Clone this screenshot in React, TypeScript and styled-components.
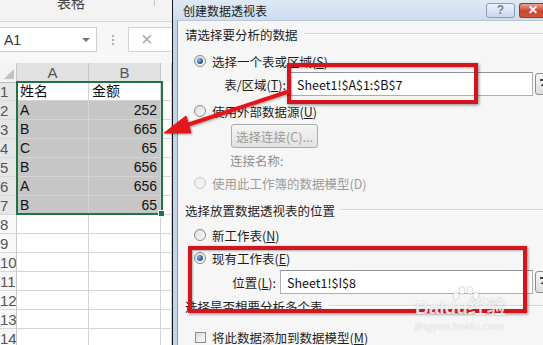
import React from "react";
import styled, { createGlobalStyle } from "styled-components";

const GlobalStyle = createGlobalStyle`
  html, body {
    margin: 0;
    padding: 0;
    background: #fff;
  }
  body {
    width: 543px;
    height: 345px;
    overflow: hidden;
  }
`;

const CJK = `"Noto Sans CJK SC", "Liberation Sans", sans-serif`;
const SHEET_FONT = `"Liberation Sans", "Noto Sans CJK SC", sans-serif`;

const Page = styled.div`
  position: relative;
  display: flex;
  width: 543px;
  height: 345px;
  overflow: hidden;
  background: #fff;
`;

/* ---------- spreadsheet ---------- */

const Sheet = styled.div`
  width: 172px;
  flex: none;
  display: flex;
  flex-direction: column;
  border-right: 1px solid #151515;
  background: #fff;
  font-family: ${SHEET_FONT};
  overflow: hidden;
`;

const Ribbon = styled.div`
  height: 22px;
  flex: none;
  display: flex;
  box-sizing: border-box;
  background: #f3f3f3;
  border-bottom: 1px solid #d6d6d6;
`;

const RibbonGroup = styled.div`
  width: 155px;
  height: 11px;
  box-sizing: border-box;
  padding-right: 12px;
  border-right: 1px solid #c6c6c6;
  text-align: center;
  font-family: ${CJK};
  font-size: 14px;
  line-height: 14px;
  color: #444;
  margin-top: -5px;
  overflow: visible;
`;

const FormulaBar = styled.div`
  height: 41px;
  flex: none;
  display: flex;
  align-items: flex-start;
  box-sizing: border-box;
  padding-top: 5px;
  background: #f7f7f7;
`;

const NameBox = styled.div`
  width: 97px;
  height: 25px;
  box-sizing: border-box;
  display: flex;
  align-items: center;
  justify-content: space-between;
  padding: 0 6px 0 4px;
  background: #fff;
  border: 1px solid #cfcfcf;
  border-left: none;
  font-size: 14px;
  color: #333;
`;

const DropArrow = styled.span`
  width: 0;
  height: 0;
  border-left: 4px solid transparent;
  border-right: 4px solid transparent;
  border-top: 4px solid #777;
`;

const Dots = styled.div`
  width: 31px;
  height: 25px;
  display: flex;
  flex-direction: column;
  align-items: center;
  justify-content: center;
  gap: 2px;
`;

const Dot = styled.span`
  width: 2px;
  height: 2px;
  background: #b0b0b0;
`;

const CancelBox = styled.div`
  flex: 1;
  height: 25px;
  box-sizing: border-box;
  display: flex;
  align-items: center;
  padding-left: 12px;
  background: #fff;
  border: 1px solid #d4d4d4;
  border-right: none;
  font-size: 20px;
  color: #a8a8a8;
`;

const Grid = styled.div`
  position: relative;
  display: flex;
  flex-direction: column;
`;

const GridRow = styled.div`
  display: grid;
  grid-template-columns: 17px 72px 72px 1fr;
  height: 19px;
  flex: none;
`;

const Cell = styled.div<{ $selected?: boolean; $right?: boolean }>`
  box-sizing: border-box;
  border-right: 1px solid #d4d4d4;
  border-bottom: 1px solid #d4d4d4;
  background: ${(p) => (p.$selected ? "#c6c6c6" : "#fff")};
  font-size: 14px;
  line-height: 18px;
  color: #111;
  padding: 0 ${(p) => (p.$right ? "3px" : "0")} 0 ${(p) => (p.$right ? "0" : "3px")};
  text-align: ${(p) => (p.$right ? "right" : "left")};
  white-space: nowrap;
  overflow: hidden;
`;

const RowHead = styled.div<{ $active?: boolean }>`
  box-sizing: border-box;
  border-right: 1px solid #c6c6c6;
  border-bottom: 1px solid #d8d8d8;
  background: ${(p) => (p.$active ? "#e6e6e6" : "#f8f8f8")};
  font-size: 15px;
  line-height: 19px;
  color: #555;
  overflow: hidden;
`;

const ColHead = styled.div<{ $active?: boolean }>`
  box-sizing: border-box;
  border-right: 1px solid #c6c6c6;
  border-bottom: 1px solid #bdbdbd;
  background: ${(p) => (p.$active ? "#e1e1e1" : "#f3f3f3")};
  font-size: 15px;
  line-height: 19px;
  color: #555;
  text-align: center;
`;

const Corner = styled.div`
  position: relative;
  box-sizing: border-box;
  border-right: 1px solid #c6c6c6;
  border-bottom: 1px solid #bdbdbd;
  background: #f3f3f3;
  &::after {
    content: "";
    position: absolute;
    right: 2px;
    bottom: 3px;
    width: 0;
    height: 0;
    border-left: 10px solid transparent;
    border-bottom: 10px solid #c2c2c2;
  }
`;

const Selection = styled.div`
  position: absolute;
  left: 16px;
  top: 18px;
  width: 147px;
  height: 134px;
  box-sizing: border-box;
  border: 2px solid #217346;
  pointer-events: none;
`;

const FillHandle = styled.span`
  position: absolute;
  right: -4px;
  bottom: -4px;
  width: 5px;
  height: 5px;
  background: #217346;
  border: 1px solid #fff;
`;

/* ---------- dialog ---------- */

const Dialog = styled.div`
  flex: 1;
  display: flex;
  flex-direction: column;
  background: linear-gradient(90deg, #c3d5ec, #c9daef);
  font-family: ${CJK};
  color: #1e1e1e;
  overflow: hidden;
`;

const TitleBar = styled.div`
  height: 20px;
  flex: none;
  display: flex;
  align-items: center;
  padding-left: 10px;
  background: linear-gradient(#dfe9f5, #cedcee);
  font-size: 12px;
  color: #1b1b1b;
`;

const TitleText = styled.span`
  flex: 1;
`;

const HelpButton = styled.span`
  width: 29px;
  height: 15px;
  box-sizing: border-box;
  display: flex;
  align-items: center;
  justify-content: center;
  margin-right: 4px;
  border: 1px solid #8b9cb4;
  border-radius: 3px;
  background: linear-gradient(#eef3fa, #c9d7ea);
  font-family: "Liberation Sans", sans-serif;
  font-size: 12px;
  font-weight: bold;
  color: #6f7f96;
`;

const CloseButton = styled.span`
  width: 24px;
  height: 15px;
  box-sizing: border-box;
  display: flex;
  align-items: center;
  padding-left: 8px;
  border: 1px solid #8d3b2c;
  border-right: none;
  border-radius: 3px 0 0 3px;
  background: linear-gradient(#e9a493, #c9452d 55%, #d3583c);
  font-family: "Liberation Sans", sans-serif;
  font-size: 12px;
  font-weight: bold;
  color: #fff;
`;

const Body = styled.div`
  flex: 1;
  display: flex;
  flex-direction: column;
  margin-left: 4px;
  padding-left: 7px;
  border-left: 1px solid #8e9db2;
  border-top: 1px solid #b8c6d8;
  background: #f6f6f6;
  font-size: 12.5px;
  overflow: hidden;
`;

const SectionTitle = styled.div<{ $mt: number }>`
  height: 20px;
  flex: none;
  display: flex;
  align-items: center;
  margin-top: ${(p) => p.$mt}px;
  white-space: nowrap;
  &::after {
    content: "";
    flex: 1;
    margin-left: 6px;
    border-top: 1px solid #d7d7d7;
    border-bottom: 1px solid #fff;
  }
`;

const OptionRow = styled.div<{ $mt: number; $indent?: number; $disabled?: boolean }>`
  height: 20px;
  flex: none;
  display: flex;
  align-items: center;
  gap: 6px;
  margin-top: ${(p) => p.$mt}px;
  padding-left: ${(p) => p.$indent ?? 9}px;
  color: ${(p) => (p.$disabled ? "#9b9b9b" : "#1e1e1e")};
  white-space: nowrap;
`;

const Radio = styled.span<{ $checked?: boolean; $disabled?: boolean }>`
  position: relative;
  width: 12px;
  height: 12px;
  flex: none;
  box-sizing: border-box;
  border-radius: 50%;
  border: 1px solid ${(p) => (p.$disabled ? "#c8c8c8" : "#8a8a8a")};
  background: ${(p) =>
    p.$disabled ? "#f2f2f2" : "linear-gradient(135deg, #dedede, #fbfbfb)"};
  &::after {
    content: "";
    display: ${(p) => (p.$checked ? "block" : "none")};
    position: absolute;
    left: 2px;
    top: 2px;
    width: 6px;
    height: 6px;
    border-radius: 50%;
    background: radial-gradient(circle at 35% 35%, #8fb7e4, #1d4f8a 70%);
  }
`;

const CheckBox = styled.span`
  width: 11px;
  height: 11px;
  flex: none;
  box-sizing: border-box;
  border: 1px solid #8e8e8e;
  background: linear-gradient(135deg, #dcdcdc, #fafafa);
`;

const FieldRow = styled.div<{ $mt: number }>`
  height: 24px;
  flex: none;
  display: flex;
  align-items: center;
  margin-top: ${(p) => p.$mt}px;
`;

const FieldLabel = styled.span<{ $width: number }>`
  width: ${(p) => p.$width}px;
  flex: none;
  box-sizing: border-box;
  padding-right: 4px;
  text-align: right;
  white-space: nowrap;
`;

const TextInput = styled.div<{ $width: number }>`
  flex: none;
  width: ${(p) => p.$width}px;
  height: 24px;
  box-sizing: border-box;
  display: flex;
  align-items: center;
  padding-left: 6px;
  background: #fff;
  border: 1px solid #abadb3;
  border-top-color: #8f939c;
  font-size: 12.5px;
  color: #111;
`;

const CollapseButton = styled.span`
  width: 20px;
  height: 22px;
  flex: none;
  box-sizing: border-box;
  margin-left: 2px;
  display: flex;
  align-items: center;
  padding-left: 3px;
  border: 1px solid #8c8c8c;
  border-radius: 3px;
  background: linear-gradient(#f7f7f7, #dedede);
`;

const ConnectButton = styled.div`
  width: 87px;
  height: 24px;
  flex: none;
  box-sizing: border-box;
  margin-top: 3px;
  margin-left: 46px;
  display: flex;
  align-items: center;
  justify-content: center;
  border: 1px solid #acacac;
  border-radius: 3px;
  background: linear-gradient(#f4f4f4, #e2e2e2);
  color: #9a9a9a;
  white-space: nowrap;
`;

const PlainRow = styled.div<{ $mt: number; $indent: number }>`
  height: 20px;
  flex: none;
  display: flex;
  align-items: center;
  margin-top: ${(p) => p.$mt}px;
  padding-left: ${(p) => p.$indent}px;
  color: #8f8f8f;
  white-space: nowrap;
`;

/* ---------- annotations ---------- */

const RedBox = styled.div<{ $x: number; $y: number; $w: number; $h: number }>`
  position: absolute;
  left: ${(p) => p.$x}px;
  top: ${(p) => p.$y}px;
  width: ${(p) => p.$w}px;
  height: ${(p) => p.$h}px;
  box-sizing: border-box;
  border: 4px solid #d3161d;
  box-shadow: 1px 1px 3px rgba(0, 0, 0, 0.45), inset 1px 1px 2px rgba(0, 0, 0, 0.3);
  pointer-events: none;
`;

const ArrowLayer = styled.svg`
  position: absolute;
  left: 0;
  top: 0;
  pointer-events: none;
`;

const Watermark = styled.div`
  position: absolute;
  left: 415px;
  top: 286px;
  width: 100px;
  display: flex;
  flex-direction: column;
  align-items: flex-start;
  pointer-events: none;
`;

const Paw = styled.svg`
  margin-left: 36px;
  margin-bottom: -6px;
`;

const WatermarkLogo = styled.div`
  font-family: "Liberation Sans", "Noto Sans CJK SC", sans-serif;
  font-size: 19px;
  font-weight: bold;
  line-height: 19px;
  color: rgba(255, 255, 255, 0.85);
  text-shadow: 0 0 1px rgba(0, 0, 0, 0.3);
  white-space: nowrap;
`;

const WatermarkUrl = styled.div`
  font-family: "Liberation Sans", sans-serif;
  font-size: 11px;
  line-height: 12px;
  color: rgba(255, 255, 255, 0.7);
  text-shadow: 0 0 1px rgba(0, 0, 0, 0.2);
  margin-top: 3px;
  white-space: nowrap;
`;

const rows: [string, string][] = [
  ["姓名", "金额"],
  ["A", "252"],
  ["B", "665"],
  ["C", "65"],
  ["B", "656"],
  ["A", "656"],
  ["B", "65"],
];

const CollapseIcon = () => (
  <svg width="10" height="12" viewBox="0 0 10 12">
    <rect x="1" y="1" width="8" height="2" fill="#444" />
    <path d="M5 4 L1.5 8 H4 V11 H6 V8 H8.5 Z" fill="#444" />
  </svg>
);

const App = () => {
  const blankRows = [8, 9, 10, 11, 12, 13, 14];

  return (
    <>
      <GlobalStyle />
      <Page>
        <Sheet>
          <Ribbon>
            <RibbonGroup>表格</RibbonGroup>
          </Ribbon>
          <FormulaBar>
            <NameBox>
              A1
              <DropArrow />
            </NameBox>
            <Dots>
              <Dot />
              <Dot />
              <Dot />
            </Dots>
            <CancelBox>×</CancelBox>
          </FormulaBar>
          <Grid>
            <GridRow>
              <Corner />
              <ColHead $active>A</ColHead>
              <ColHead $active>B</ColHead>
              <ColHead />
            </GridRow>
            {rows.map(([a, b], i) => (
              <GridRow key={i}>
                <RowHead $active>{i + 1}</RowHead>
                <Cell $selected={i > 0}>{a}</Cell>
                <Cell $selected={i > 0} $right={i > 0}>
                  {b}
                </Cell>
                <Cell />
              </GridRow>
            ))}
            {blankRows.map((n) => (
              <GridRow key={n}>
                <RowHead>{n}</RowHead>
                <Cell />
                <Cell />
                <Cell />
              </GridRow>
            ))}
            <Selection>
              <FillHandle />
            </Selection>
          </Grid>
        </Sheet>

        <Dialog>
          <TitleBar>
            <TitleText>创建数据透视表</TitleText>
            <HelpButton>?</HelpButton>
            <CloseButton>✕</CloseButton>
          </TitleBar>
          <Body>
            <SectionTitle $mt={3}>请选择要分析的数据</SectionTitle>
            <OptionRow $mt={7}>
              <Radio $checked />
              <span>
                选择一个表或区域(<u>S</u>)
              </span>
            </OptionRow>
            <FieldRow $mt={1}>
              <FieldLabel $width={105}>
                表/区域(<u>T</u>):
              </FieldLabel>
              <TextInput $width={243}>Sheet1!$A$1:$B$7</TextInput>
              <CollapseButton>
                <CollapseIcon />
              </CollapseButton>
            </FieldRow>
            <OptionRow $mt={5}>
              <Radio />
              <span>
                使用外部数据源(<u>U</u>)
              </span>
            </OptionRow>
            <ConnectButton>选择连接(C)...</ConnectButton>
            <PlainRow $mt={2} $indent={45}>
              连接名称:
            </PlainRow>
            <OptionRow $mt={3} $disabled>
              <Radio $disabled />
              <span>使用此工作簿的数据模型(D)</span>
            </OptionRow>
            <SectionTitle $mt={7}>选择放置数据透视表的位置</SectionTitle>
            <OptionRow $mt={5}>
              <Radio />
              <span>
                新工作表(<u>N</u>)
              </span>
            </OptionRow>
            <OptionRow $mt={3}>
              <Radio $checked />
              <span>
                现有工作表(<u>E</u>)
              </span>
            </OptionRow>
            <FieldRow $mt={2}>
              <FieldLabel $width={95}>
                位置(<u>L</u>):
              </FieldLabel>
              <TextInput $width={253}>Sheet1!$I$8</TextInput>
              <CollapseButton>
                <CollapseIcon />
              </CollapseButton>
            </FieldRow>
            <SectionTitle $mt={2}>选择是否想要分析多个表</SectionTitle>
            <OptionRow $mt={11} $indent={10}>
              <CheckBox />
              <span>
                将此数据添加到数据模型(<u>M</u>)
              </span>
            </OptionRow>
          </Body>
        </Dialog>

        <RedBox $x={287} $y={63} $w={191} $h={41} />
        <RedBox $x={188} $y={246} $w={339} $h={67} />

        <ArrowLayer width="543" height="345" viewBox="0 0 543 345">
          <defs>
            <filter id="arrowShadow" x="-10%" y="-10%" width="120%" height="130%">
              <feDropShadow dx="1" dy="1" stdDeviation="1" floodColor="#000" floodOpacity="0.35" />
            </filter>
          </defs>
          <g filter="url(#arrowShadow)" fill="#e3151b" stroke="#e3151b">
            <line x1="290" y1="91" x2="184" y2="126" strokeWidth="4" />
            <polygon points="164,133 186,116 191,133" strokeWidth="1" />
          </g>
        </ArrowLayer>

        <Watermark>
          <Paw width="30" height="18" viewBox="0 0 30 18">
            <g fill="rgba(255,255,255,0.85)" stroke="rgba(0,0,0,0.18)" strokeWidth="0.8">
              <ellipse cx="5" cy="10" rx="3" ry="4" />
              <ellipse cx="11" cy="4.5" rx="3" ry="4" />
              <ellipse cx="19" cy="4.5" rx="3" ry="4" />
              <ellipse cx="25" cy="10" rx="3" ry="4" />
            </g>
          </Paw>
          <WatermarkLogo>Baidu经验</WatermarkLogo>
          <WatermarkUrl>jingyan.baidu.com</WatermarkUrl>
        </Watermark>
      </Page>
    </>
  );
};

export default App;
